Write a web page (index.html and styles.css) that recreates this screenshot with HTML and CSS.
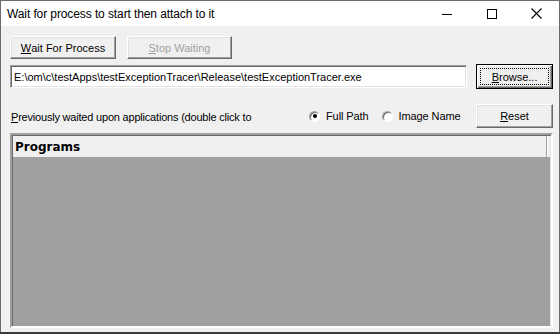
FILE: index.html
```html
<!DOCTYPE html>
<html lang="en">
<head>
    <meta charset="UTF-8">
    <title>Wait for process to start then attach to it</title>
    <link rel="stylesheet" href="styles.css">
</head>
<body>
    <div class="window">
        <div class="titlebar">
            <span class="title">Wait for process to start then attach to it</span>
            <div class="caption-buttons">
                <span class="caption-btn">
                    <svg width="10" height="10" viewBox="0 0 10 10"><line x1="0" y1="5.5" x2="10" y2="5.5" stroke="#000" stroke-width="1"/></svg>
                </span>
                <span class="caption-btn">
                    <svg width="10" height="10" viewBox="0 0 10 10"><rect x="0.5" y="0.5" width="9" height="9" fill="none" stroke="#000" stroke-width="1"/></svg>
                </span>
                <span class="caption-btn">
                    <svg width="11" height="11" viewBox="0 0 11 11"><path d="M0.5 0.5 L10.5 10.5 M10.5 0.5 L0.5 10.5" stroke="#000" stroke-width="1.1"/></svg>
                </span>
            </div>
        </div>

        <div class="client">
            <div class="row row-actions">
                <button class="btn btn-wait"><u>W</u>ait For Process</button>
                <button class="btn btn-stop" disabled><u>S</u>top Waiting</button>
            </div>

            <div class="row row-path">
                <input class="path-input" type="text" value="E:\om\c\testApps\testExceptionTracer\Release\testExceptionTracer.exe">
                <button class="btn btn-side btn-default"><span class="focus-rect"><u>B</u>rowse...</span></button>
            </div>

            <div class="row row-options">
                <span class="label"><u>P</u>reviously waited upon applications (double click to</span>
                <div class="radios">
                    <label class="radio"><span class="radio-dot checked"></span>Full Path</label>
                    <label class="radio"><span class="radio-dot"></span>Image Name</label>
                </div>
                <button class="btn btn-side"><u>R</u>eset</button>
            </div>

            <div class="listview">
                <div class="list-header">
                    <span class="col-head">Programs</span>
                </div>
                <div class="list-body"></div>
            </div>
        </div>
    </div>
</body>
</html>
```

FILE: styles.css
```css
html, body {
    margin: 0;
    padding: 0;
}

body {
    background-color: #3a3a3a;
    font-family: "Liberation Sans", Arial, sans-serif;
    font-size: 11px;
    color: #000;
}

.window {
    width: 558px;
    height: 331px;
    border: 1px solid #6b6b6b;
    border-bottom: none;
    background-color: #f0f0f0;
    display: flex;
    flex-direction: column;
}

.titlebar {
    height: 25px;
    background-color: #fff;
    display: flex;
    align-items: center;
    justify-content: space-between;
}

.title {
    font-size: 12px;
    padding-left: 6px;
    padding-top: 1px;
    letter-spacing: -0.1px;
}

.caption-buttons {
    display: flex;
    align-items: center;
    height: 100%;
}

.caption-btn {
    width: 45px;
    height: 100%;
    display: flex;
    align-items: center;
    justify-content: center;
}

.caption-btn svg {
    display: block;
}

.client {
    flex: 1;
    padding: 0 0 0 9px;
    display: flex;
    flex-direction: column;
}

.row {
    display: flex;
    align-items: center;
}

.row-actions {
    margin-top: 10px;
    gap: 11px;
}

.btn {
    font-family: "Liberation Sans", Arial, sans-serif;
    font-size: 11px;
    color: #000;
    background-color: #f0f0f0;
    height: 23px;
    padding: 0;
    border: 1px solid;
    border-color: #fff #696969 #696969 #fff;
    box-shadow: inset -1px -1px #a0a0a0, inset 1px 1px #e3e3e3;
    display: flex;
    align-items: center;
    justify-content: center;
}

.btn-wait {
    width: 106px;
}

.btn-stop {
    width: 105px;
    color: #a0a0a0;
}

.row-path {
    margin-top: 5px;
    gap: 9px;
}

.path-input {
    width: 458px;
    height: 23px;
    box-sizing: border-box;
    margin: 0;
    padding: 0 3px;
    font-family: "Liberation Sans", Arial, sans-serif;
    font-size: 11px;
    color: #000;
    background-color: #fff;
    border: 1px solid;
    border-color: #a0a0a0 #fff #fff #a0a0a0;
    box-shadow: inset 1px 1px #696969, inset -1px -1px #e3e3e3;
    outline: none;
}

.btn-side {
    width: 77px;
    height: 24px;
    margin-left: auto;
    margin-right: 6px;
}

.btn-default {
    height: 25px;
    outline: 1px solid #000;
    outline-offset: -1px;
    border-color: #000;
    box-shadow: inset 1px 1px #fff, inset -1px -1px #696969, inset -2px -2px #a0a0a0;
}

.focus-rect {
    border: 1px dotted #000;
    width: 67px;
    height: 15px;
    display: flex;
    align-items: center;
    justify-content: center;
}

.row-options {
    margin-top: 15px;
}

.label {
    width: 243px;
    white-space: nowrap;
    padding-left: 1px;
    padding-top: 1px;
    letter-spacing: -0.2px;
}

.radios {
    display: flex;
    align-items: center;
    gap: 13px;
    margin-left: 55px;
}

.radio {
    display: flex;
    align-items: center;
    gap: 6px;
    letter-spacing: -0.1px;
}

.radio-dot {
    width: 9px;
    height: 9px;
    border-radius: 50%;
    background-color: #fff;
    border: 1px solid;
    border-color: #a0a0a0 #fff #fff #a0a0a0;
    box-shadow: inset 1px 1px #696969;
    display: flex;
    align-items: center;
    justify-content: center;
}

.radio-dot.checked::after {
    content: "";
    width: 4px;
    height: 4px;
    border-radius: 50%;
    background-color: #000;
}

.listview {
    margin-top: 5px;
    width: 537px;
    height: 190px;
    border: 2px solid;
    border-color: #a0a0a0 #fff #fff #a0a0a0;
    box-shadow: inset 1px 1px #696969, inset -1px -1px #e3e3e3;
    display: flex;
    flex-direction: column;
    padding: 1px 1px 0 1px;
}

.list-header {
    height: 21px;
    background-color: #f0f0f0;
    display: flex;
}

.col-head {
    flex: 1;
    font-family: "DejaVu Sans", Verdana, sans-serif;
    font-weight: bold;
    font-size: 12px;
    padding-left: 2px;
    display: flex;
    align-items: center;
    border-right: 1px solid #a0a0a0;
    box-shadow: 1px 0 #fff;
    margin-right: 3px;
}

.list-body {
    flex: 1;
    background-color: #a0a0a0;
}
```
